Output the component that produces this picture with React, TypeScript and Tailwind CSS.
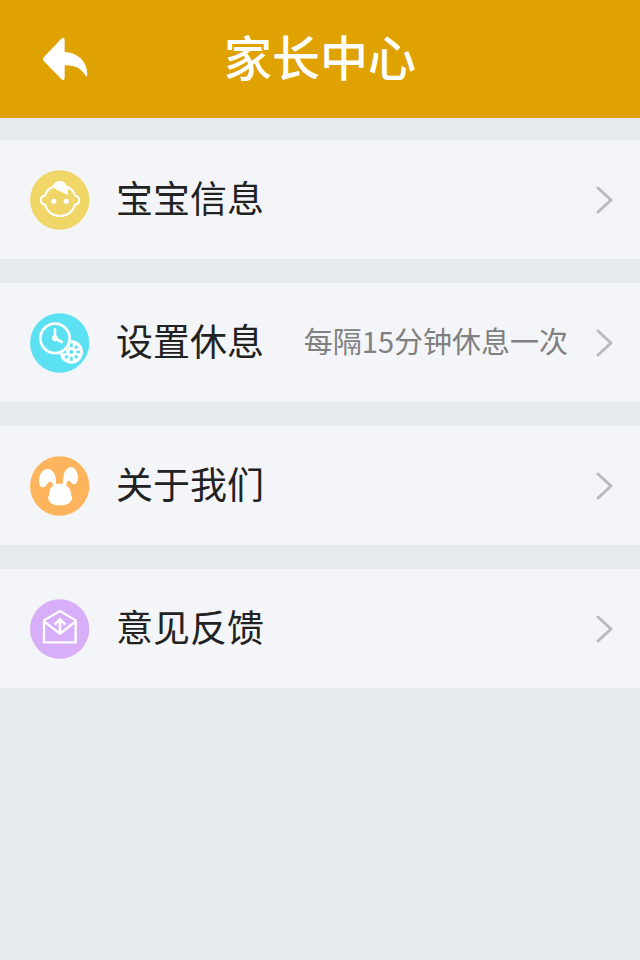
import type { ReactNode } from "react"

const BabyIcon = () => (
  <svg viewBox="30 30 180 180" className="size-[60px] shrink-0" aria-hidden="true">
    <circle cx="119" cy="120" r="89" fill="#f0d666" />
    <path
      d="M74 108 C80 88 96 77 120 77 C144 77 160 88 166 108 C181 107 182 132 166 133 C158 155 142 168 120 168 C98 168 82 155 74 133 C58 132 59 107 74 108 Z"
      fill="none"
      stroke="#fff"
      strokeWidth="6"
      strokeLinejoin="round"
    />
    <path d="M99 79 C102 67 110 63 120 63 C130 63 137 68 139 78 C144 85 146 94 144 105 C135 100 130 98 124 95 C113 92 104 88 99 79 Z" fill="#fff" />
    <circle cx="101" cy="124" r="8" fill="#fff" />
    <circle cx="139" cy="124" r="8" fill="#fff" />
  </svg>
)

const ClockIcon = () => (
  <svg viewBox="30 30 180 180" className="size-[60px] shrink-0" aria-hidden="true">
    <circle cx="119" cy="120" r="89" fill="#5be1f2" />
    <circle cx="154" cy="147" r="35" fill="#fff" />
    <path
      d="M154 121v11M154 162v11M128 147h11M169 147h11M136 129l7 7M165 158l7 7M136 165l7-7M165 136l7-7"
      stroke="#5be1f2"
      strokeWidth="8"
    />
    <circle cx="154" cy="147" r="6" fill="#5be1f2" />
    <circle cx="105" cy="106" r="48" fill="#5be1f2" />
    <circle cx="105" cy="106" r="44" fill="#5be1f2" stroke="#fff" strokeWidth="8" />
    <path d="M105 80v26l20 11" fill="none" stroke="#fff" strokeWidth="8" strokeLinecap="round" />
    <circle cx="105" cy="106" r="9" fill="#fff" />
  </svg>
)

const RabbitIcon = () => (
  <svg viewBox="30 30 180 180" className="size-[60px] shrink-0" aria-hidden="true">
    <circle cx="119" cy="120" r="89" fill="#fdb45c" />
    <path
      d="M108 115 C109 100 107 86 99 77 C92 68 80 67 71 73 C61 80 57 93 57 106 C57 117 62 125 70 124 C80 123 82 107 91 107 C97 107 99 113 99 119 C91 124 88 135 87 148 C83 154 84 159 87 164 C92 174 105 178 120 178 C136 178 148 174 153 164 C157 159 158 154 154 148 C153 135 149 124 139 119 C139 110 141 104 147 104 C153 105 155 116 163 115 C172 113 175 101 173 88 C171 73 163 64 153 64 C142 64 134 74 131 88 C129 98 130 107 127 115 C121 112 115 112 108 115 Z"
      fill="#fff"
    />
  </svg>
)

const MailIcon = () => (
  <svg viewBox="30 30 180 180" className="size-[60px] shrink-0" aria-hidden="true">
    <circle cx="119" cy="120" r="89" fill="#d7aef7" />
    <g fill="none" stroke="#fff" strokeWidth="7">
      <path d="M72 160V94L120 66L167 94V160Z" />
      <path d="M72 97L120 134L167 97" />
      <path d="M120 132V93M104 107L120 91L136 107" strokeWidth="8" />
    </g>
  </svg>
)

const BackIcon = () => (
  <svg viewBox="69 51 135 132" className="h-11 w-[45px]" aria-hidden="true">
    <path
      d="M71 112 L124 56 Q133 49 134 60 V96 C172 97 203 124 202 166 Q201 173 196 166 C184 145 165 135 134 136 V173 Q133 184 124 177 L71 123 Q67 117 71 112 Z"
      fill="#fff"
    />
  </svg>
)

const ChevronIcon = () => (
  <svg viewBox="0 0 18 28" className="h-7 w-[18px] shrink-0" aria-hidden="true">
    <path d="M2 2L15 14L2 26" fill="none" stroke="#b9babc" strokeWidth="3" strokeLinecap="round" strokeLinejoin="round" />
  </svg>
)

type MenuItem = {
  id: string
  title: string
  icon: ReactNode
  note?: string
}

const menuItems: MenuItem[] = [
  { id: "baby", title: "宝宝信息", icon: <BabyIcon /> },
  { id: "rest", title: "设置休息", icon: <ClockIcon />, note: "每隔15分钟休息一次" },
  { id: "about", title: "关于我们", icon: <RabbitIcon /> },
  { id: "feedback", title: "意见反馈", icon: <MailIcon /> },
]

export default function App() {
  return (
    <div className="min-h-screen bg-[#e4eaed] font-['Noto_Sans_CJK_SC',sans-serif]">
      <header className="grid h-[118px] grid-cols-[1fr_auto_1fr] items-center bg-[#dfa200] px-[43px]">
        <button type="button" aria-label="返回" className="w-fit">
          <BackIcon />
        </button>
        <h1 className="pb-2 text-5xl font-medium text-white">家长中心</h1>
      </header>

      <nav className="flex flex-col gap-6 pt-[22px]">
        {menuItems.map((item) => (
          <a key={item.id} href={`#${item.id}`} className="flex h-[119px] items-center bg-[#f3f5f8] pr-[26px] pl-[30px]">
            {item.icon}
            <span className="ml-[26px] pb-1 text-[37px] text-[#222]">{item.title}</span>
            <span className="mr-7 ml-auto pb-1 text-[29px] text-[#808080]">{item.note}</span>
            <ChevronIcon />
          </a>
        ))}
      </nav>
    </div>
  )
}
